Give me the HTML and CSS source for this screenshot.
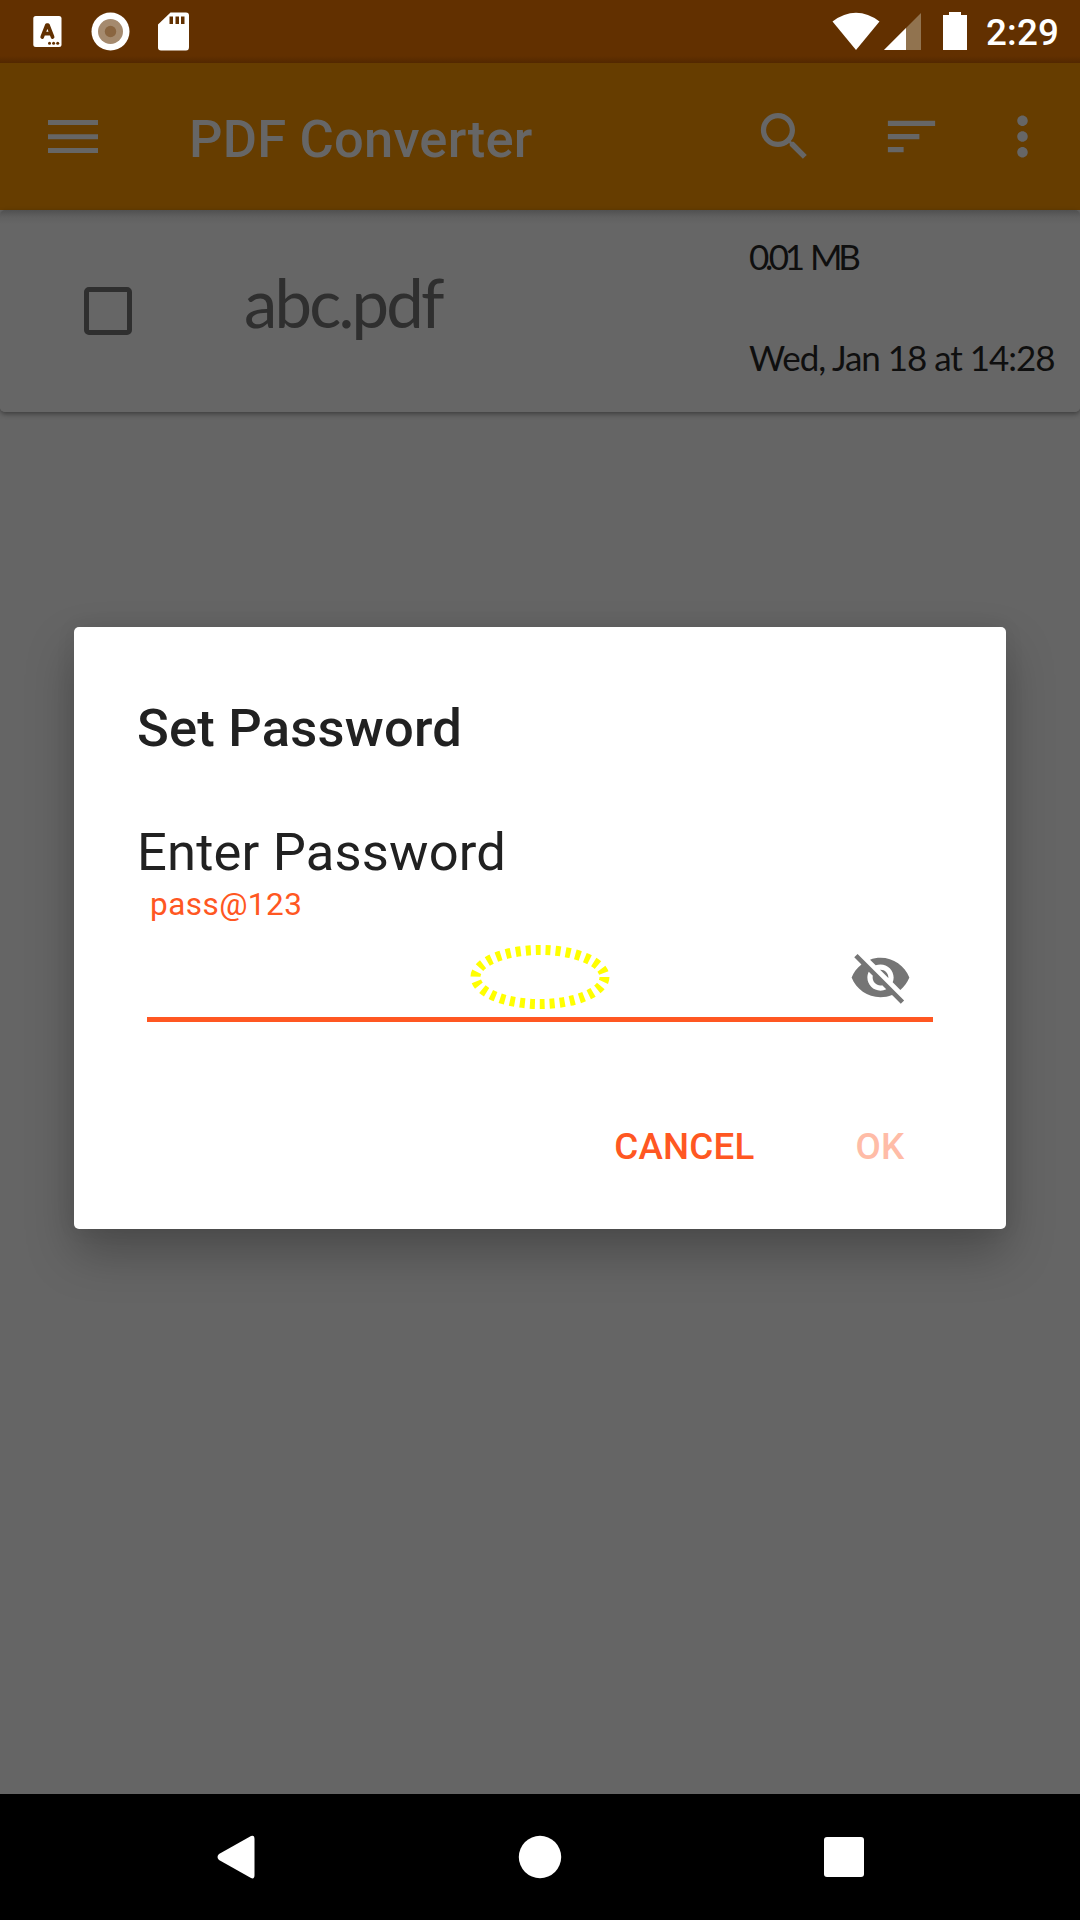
FILE: index.html
```html
<!DOCTYPE html>
<html lang="en">
<head>
<meta charset="utf-8">
<title>PDF Converter</title>
<link rel="stylesheet" href="styles.css">
</head>
<body>
<div class="screen">
  <header class="status">
    <svg class="status-icons" width="200" height="63" viewBox="0 0 200 63">
      <rect x="33.3" y="16" width="28.2" height="31" rx="2.5" fill="#fff"/>
      <path d="M42.2 37 46.900 25h1l4.700 12M44.200 33.600h6.400" fill="none" stroke="#623000" stroke-width="3.700" stroke-linecap="round" stroke-linejoin="round"/>
      <circle cx="49.500" cy="43.200" r="1.500" fill="#623000"/><circle cx="53.600" cy="43.200" r="1.500" fill="#623000"/><circle cx="57.700" cy="43.200" r="1.500" fill="#623000"/>
      <circle cx="110.5" cy="31.5" r="19" fill="#fff"/>
      <circle cx="110.5" cy="31.5" r="12.5" fill="#a58a6e"/>
      <circle cx="110.5" cy="31.5" r="5.7" fill="#8a6540"/>
      <path d="M170.5 12.5H186q3 0 3 3V47q0 3.500-3 3.500H161q-3 0-3-3V24.500z" fill="#fff"/>
      <path d="M169.500 16.500h3.500v7.500h-3.500zM175.500 16.500h3.500v7.500h-3.500zM181 16.500h3.500v7.500H181z" fill="#623000"/>
    </svg>
    <div class="status-right">
      <svg width="136" height="63" viewBox="832 0 136 63">
        <path d="M832.500 21.500Q844 12.800 856 12.800T879.500 21.500L856 50z" fill="#fff"/>
        <path d="M921 13v37h-37z" fill="#91734f"/>
        <path d="M906 28v22h-22z" fill="#fff"/>
        <path d="M949 12h12v3h6v35h-24V15h6z" fill="#fff"/>
      </svg>
      <span class="clock">2:29</span>
    </div>
  </header>
  <nav class="toolbar">
    <svg width="50" height="36" viewBox="0 0 50 36"><path d="M0 1h50v5H0zM0 15.300h50v5H0zM0 29h50v5H0z" fill="#666"/></svg>
    <h1 class="app-title">PDF Converter</h1>
    <div class="actions">
      <svg width="63" height="63" viewBox="0 0 24 24"><path fill="#666" d="M15.500 14h-.79l-.28-.27C15.410 12.590 16 11.110 16 9.500 16 5.910 13.090 3 9.500 3S3 5.910 3 9.500 5.910 16 9.500 16c1.610 0 3.090-.59 4.230-1.570l.27.28v.79l5 4.990L20.490 19l-4.990-5zm-6 0C7.010 14 5 11.990 5 9.500S7.010 5 9.500 5 14 7.010 14 9.500 11.990 14 9.500 14z"/></svg>
      <svg width="63" height="63" viewBox="0 0 24 24"><path fill="#666" d="M3 18h6v-2H3v2zM3 6v2h18V6H3zm0 7h12v-2H3v2z"/></svg>
      <svg width="63" height="63" viewBox="0 0 24 24"><path fill="#666" d="M12 8c1.100 0 2-.9 2-2s-.9-2-2-2-2 .9-2 2 .9 2 2 2zm0 2c-1.100 0-2 .9-2 2s.9 2 2 2 2-.9 2-2-.9-2-2-2zm0 6c-1.100 0-2 .9-2 2s.9 2 2 2 2-.9 2-2-.9-2-2-2z"/></svg>
    </div>
  </nav>
  <main class="content">
    <article class="file">
      <span class="checkbox"></span>
      <span class="file-name">abc.pdf</span>
      <div class="file-meta">
        <span class="size">0.01 MB</span>
        <span class="date">Wed, Jan 18 at 14:28</span>
      </div>
    </article>
    <section class="dialog">
      <h2 class="dialog-title">Set Password</h2>
      <p class="prompt">Enter Password</p>
      <p class="hint">pass@123</p>
      <div class="field">
        <svg class="marker" width="140" height="66" viewBox="0 0 140 66"><ellipse cx="70" cy="33" rx="64.500" ry="27" fill="none" stroke="#ff0" stroke-width="10" stroke-dasharray="5 5"/></svg>
        <svg class="eye" width="63" height="63" viewBox="0 0 24 24"><path fill="#757575" d="M12 7c2.760 0 5 2.240 5 5 0 .65-.13 1.260-.36 1.830l2.920 2.920c1.510-1.260 2.700-2.890 3.430-4.750-1.730-4.390-6-7.500-11-7.500-1.400 0-2.740.25-3.980.7l2.160 2.160C10.740 7.130 11.350 7 12 7zM2 4.270l2.280 2.280.46.46C3.080 8.300 1.780 10.020 1 12c1.730 4.390 6 7.500 11 7.500 1.550 0 3.030-.3 4.380-.84l.42.42L19.730 22 21 20.730 3.270 3 2 4.270zM7.530 9.800l1.550 1.550c-.05.21-.08.43-.08.65 0 1.660 1.340 3 3 3 .22 0 .44-.03.65-.08l1.550 1.550c-.67.33-1.410.53-2.200.53-2.760 0-5-2.240-5-5 0-.79.2-1.530.53-2.200zm4.310-.78l3.150 3.150.02-.16c0-1.660-1.340-3-3-3l-.17.01z"/></svg>
      </div>
      <div class="buttons"><span>CANCEL</span><span class="disabled">OK</span></div>
    </section>
  </main>
  <footer class="navbar">
    <svg width="1080" height="126" viewBox="0 0 1080 126"><path d="M251 42Q254.500 40.500 254.500 45V81Q254.500 85.500 251 84L219 66Q216 63 219 60z" fill="#fff"/><circle cx="540" cy="63" r="21.200" fill="#fff"/><rect x="824" y="43" width="40" height="40" rx="3" fill="#fff"/></svg>
  </footer>
</div>
</body>
</html>
```

FILE: styles.css
```css
* { box-sizing: border-box; }
body { margin: 0; font-family: Roboto, "Liberation Sans", sans-serif; }
h1, h2, p { margin: 0; }
svg { display: block; }
.screen { width: 1080px; height: 1920px; display: flex; flex-direction: column; background: #666; overflow: hidden; }
.status { height: 63px; display: flex; justify-content: space-between; background: linear-gradient(#623000 56px, #532800 63px); }
.status-right { display: flex; gap: 18px; padding-right: 19px; }
.clock { width: 75px; font-size: 36.75px; font-weight: 500; line-height: 66px; letter-spacing: .15px; color: #fff; }
.toolbar { height: 147px; display: flex; align-items: center; padding-left: 48px; background: #663d00; }
.app-title { margin-left: 91px; font-size: 52.5px; font-weight: 500; line-height: 70px; padding-top: 4px; letter-spacing: .2px; color: #666; }
.actions { display: flex; margin-left: auto; padding-right: 26px; }
.actions svg + svg { margin-left: 64px; }
.actions svg:last-child { margin-left: 48px; }
.content { flex: 1; display: flex; flex-direction: column; align-items: center; background: #656565; }
.file { width: 1080px; height: 202px; flex: none; display: flex; border-radius: 5px; background: linear-gradient(#505050, #606060 7px, #666 14px); box-shadow: 0 2px 5px rgba(0, 0, 0, .4); font-family: "Coming Soon", Lato, sans-serif; }
.checkbox { width: 48px; height: 48px; margin: 77px 0 0 84px; border: 5.5px solid #2f2f2f; border-radius: 5px; }
.file-name { width: 505px; margin-left: 112px; padding-top: 52px; font-size: 67px; line-height: 80px; letter-spacing: -2.8px; color: #2f2f2f; }
.file-meta { display: flex; flex-direction: column; padding-top: 26px; gap: 61px; font-size: 35px; line-height: 40px; color: #0f0f0f; white-space: nowrap; }
.size { letter-spacing: -4.4px; word-spacing: 5px; }
.date { letter-spacing: -1.05px; }
.dialog { width: 932px; height: 602px; margin-top: 215px; padding: 66px 63px 0; border-radius: 5px; background: #fff; color: #212121; box-shadow: 0 24px 48px rgba(0, 0, 0, .26), 0 0 20px rgba(0, 0, 0, .07); }
.dialog-title { font-size: 52.5px; font-weight: 500; line-height: 70px; letter-spacing: .22px; }
.prompt { margin-top: 57px; font-size: 52.5px; line-height: 64px; letter-spacing: .18px; }
.hint { padding: 1px 0 0 13px; font-size: 31.5px; line-height: 40px; letter-spacing: .45px; color: #ff5722; }
.field { display: grid; grid-template-columns: 1fr 140px 1fr; height: 97px; margin: 0 10px; padding: 21px 21px 0 21px; border-bottom: 5px solid #ff5722; }
.marker { grid-column: 2; margin-top: -2px; }
.eye { grid-column: 3; justify-self: end; }
.buttons { display: flex; justify-content: flex-end; gap: 101px; margin: 103px 38.5px 0 0; font-size: 36.75px; font-weight: 500; line-height: 44px; letter-spacing: .2px; color: #ff5722; }
.disabled { color: #ffbca7; }
.navbar { height: 126px; background: #000; }
```
